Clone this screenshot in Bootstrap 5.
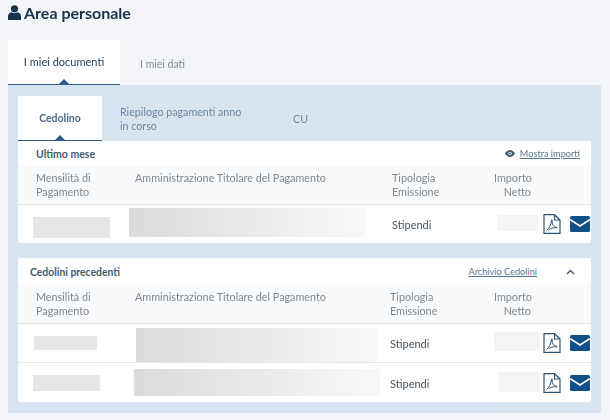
<!DOCTYPE html>
<html lang="it">
<head>
<meta charset="utf-8">
<title>Area personale</title>
<link rel="stylesheet" href="https://cdn.jsdelivr.net/npm/bootstrap@5.3.0/dist/css/bootstrap.min.css">
<style>
html,body{height:100%;overflow:hidden}
body{background:#f3f5f9;font-family:Lato,"Open Sans",sans-serif;font-size:11px;color:#4a5660;line-height:14px;padding:0 9px 0 8px;position:relative;filter:blur(.35px)}
.page-title{font-size:16px;line-height:20px;font-weight:700;color:#17324d;margin:0;padding:3px 0 0 0;height:40px;display:flex;align-items:flex-start;gap:3px}
.page-title svg{margin-top:2px}
.tabs-main{border:0;height:45px;flex-wrap:nowrap}
.tabs-main .nav-link,.tabs-sub .nav-link{border:0;border-radius:0;background:transparent;position:relative;margin:0;color:#6c87a1;font-size:10.7px;line-height:14px;padding:0}
.tabs-main .nav-link{height:45px;display:flex;align-items:center}
.tabs-main .nav-link.active,.tabs-sub .nav-link.active{background:#fff;color:#2a4359;border-bottom:1.5px solid #2f5d8a;justify-content:center}
.tabs-main .nav-link.active::after,.tabs-sub .nav-link.active::after{content:"";position:absolute;left:50%;bottom:0;margin-left:-5px;border:5px solid transparent;border-top:0;border-bottom-color:#2f5d8a}
.t-docs{width:112px;font-size:11px!important;font-weight:400}
.t-dati{margin-left:20px!important;padding-top:2px!important;font-size:10.5px!important;color:#7d8e9e!important}
.work-panel{background:#d8e4f0;height:328px;padding:11px 10px 0;width:593px}
.tabs-sub{border:0;height:45px;flex-wrap:nowrap}
.tabs-sub .nav-link{height:45px;display:flex;align-items:center}
.t-ced{width:84px;color:#4d6a86!important;font-size:10.5px!important;font-weight:700}
.t-rie{width:126px;margin-left:18px!important}
.t-cu{margin-left:47px!important}
.pay-card{border:0;border-radius:2px;background:#fff;overflow:hidden}
.pay-one{height:102px;margin-bottom:15px}
.pay-two{height:144px}
.pay-head{background:#fff;display:flex;align-items:center;justify-content:space-between;padding:0 11px 0 18px;height:25px;font-weight:700;font-size:10.5px;color:#465a6d}
.pay-two .pay-head{height:27px;padding-left:12px;padding-right:16px;font-size:10.4px}
.pay-link{font-weight:400;font-size:9.2px;color:#5a7590;text-decoration:underline;display:flex;align-items:center;gap:5px}
.archive-side{display:flex;align-items:center;gap:29px}
.archive-side svg{display:block}
.pay-cols,.pay-row{display:grid;align-items:center}
.pay-cols{grid-template-columns:117px 257px 102px 37px;background:#f8fafc;height:39px;border-bottom:1px solid #dfe3e6;color:#7c8891;align-items:start;padding-top:5px;font-size:10.8px;font-weight:400}
.pay-two .pay-cols{grid-template-columns:117px 255px 104px 37px}
.pay-cols>div:first-child{padding-left:18px}
.num-head{text-align:right;white-space:nowrap}
.pay-row{grid-template-columns:111px 263px 102px 46px 1fr;height:38px}
.pay-two .pay-row{grid-template-columns:111px 261px 104px 46px 1fr;height:39px;border-bottom:1px solid #e4e7ea}
.pay-two .pay-row:last-child{border-bottom:0}
.row-label{padding-top:2px}
.mask{display:block;background:#e6e6e5}
.wash{background:linear-gradient(90deg,#dbdcda,#e5e5e3 35%,#f3f3f2 80%,#f8f8f8)}
.faint{background:#f4f4f4}
.m1{width:77px;height:21px;margin:7px 0 0 15px}
.w1{width:236px;height:29px;margin:-4px 0 0 0}
.f1{width:40px;height:16px;margin:-2px 0 0 4px}
.m2{width:63px;height:14px;margin:0 0 0 16px}
.w2{width:242px;height:34px;margin:4px 0 0 7px}
.f2{width:46px;height:19px;margin:-3px 0 0 0}
.m3{width:67px;height:16px;margin:0 0 0 15px}
.w3{width:246px;height:27px;margin:0 0 0 5px}
.f3{width:41px;height:20px;margin:-2px 0 0 5px}
.act-icons{display:flex;align-items:center;gap:9px;margin-left:3px}
.act-icons svg{display:block}
.water{position:absolute;left:500px;top:402px;color:#dde3e9;font-size:9px;letter-spacing:.2px}
</style>
</head>
<body>
<h1 class="page-title">
<svg width="13" height="15" viewBox="0 0 13 15"><circle cx="6.500" cy="3.800" r="3.600" fill="#17324d"/><path d="M0 15v-3.200C0 8.900 1.800 7.500 3.400 7.300 4.400 8 5.400 8.300 6.500 8.300s2.100-.3 3.100-1c1.600.2 3.400 1.600 3.400 4.500V15z" fill="#17324d"/></svg>
Area personale</h1>
<ul class="nav nav-tabs tabs-main">
<li class="nav-item"><a class="nav-link active t-docs" href="#">I miei documenti</a></li>
<li class="nav-item"><a class="nav-link t-dati" href="#">I miei dati</a></li>
</ul>
<div class="work-panel">
<ul class="nav nav-tabs tabs-sub">
<li class="nav-item"><a class="nav-link active t-ced" href="#">Cedolino</a></li>
<li class="nav-item"><a class="nav-link t-rie" href="#">Riepilogo pagamenti anno in corso</a></li>
<li class="nav-item"><a class="nav-link t-cu" href="#">CU</a></li>
</ul>
<div class="card pay-card pay-one">
<div class="pay-head"><span>Ultimo mese</span>
<span class="pay-link"><svg width="10" height="7" viewBox="0 0 10 7"><path d="M0 3.500C1.200 1.300 3 0 5 0s3.800 1.300 5 3.500C8.800 5.700 7 7 5 7S1.200 5.700 0 3.500z" fill="#44607c"/><circle cx="5" cy="3.500" r="1.700" fill="#fff"/><circle cx="5" cy="3.500" r="1" fill="#44607c"/></svg><a class="pay-link" href="#">Mostra importi</a></span></div>
<div class="pay-cols"><div>Mensilità di<br>Pagamento</div><div>Amministrazione Titolare del Pagamento</div><div>Tipologia<br>Emissione</div><div class="num-head">Importo<br>Netto</div></div>
<div class="pay-row"><span class="mask m1"></span><span class="mask wash w1"></span><span class="row-label">Stipendi</span><span class="mask faint f1"></span>
<div class="act-icons">
<svg width="18" height="20" viewBox="0 0 18 20"><path d="M1 .7h10.500L17 6v13.300H1zM11.500.7V6H17" fill="#fff" stroke="#2e5474" stroke-width="1.200"/><path d="M3.500 16.500C6 15 8.500 10 8.400 6.500c0-1.200 1-.8.800.5-.4 3 1 5.600 5 6.700-3.200-.3-7 .5-8.500 2.100" fill="none" stroke="#2e5474" stroke-width="1"/></svg>
<svg width="20" height="16" viewBox="0 0 20 16"><rect width="20" height="16" rx="1.500" fill="#0f5089"/><path d="M0 3.500 10 10 20 3.500" fill="none" stroke="#fff" stroke-width="1.500"/></svg>
</div></div>
</div>
<div class="card pay-card pay-two">
<div class="pay-head"><span>Cedolini precedenti</span>
<span class="archive-side"><a class="pay-link" href="#">Archivio Cedolini</a><svg width="9" height="6" viewBox="0 0 9 6"><path d="M1 5 4.500 1.500 8 5" fill="none" stroke="#44607c" stroke-width="1.500"/></svg></span></div>
<div class="pay-cols"><div>Mensilità di<br>Pagamento</div><div>Amministrazione Titolare del Pagamento</div><div>Tipologia<br>Emissione</div><div class="num-head">Importo<br>Netto</div></div>
<div class="pay-row"><span class="mask m2"></span><span class="mask wash w2"></span><span class="row-label">Stipendi</span><span class="mask faint f2"></span>
<div class="act-icons">
<svg width="18" height="20" viewBox="0 0 18 20"><path d="M1 .7h10.500L17 6v13.300H1zM11.500.7V6H17" fill="#fff" stroke="#2e5474" stroke-width="1.200"/><path d="M3.500 16.500C6 15 8.500 10 8.400 6.500c0-1.200 1-.8.800.5-.4 3 1 5.600 5 6.700-3.200-.3-7 .5-8.500 2.100" fill="none" stroke="#2e5474" stroke-width="1"/></svg>
<svg width="20" height="16" viewBox="0 0 20 16"><rect width="20" height="16" rx="1.500" fill="#0f5089"/><path d="M0 3.500 10 10 20 3.500" fill="none" stroke="#fff" stroke-width="1.500"/></svg>
</div></div>
<div class="pay-row"><span class="mask m3"></span><span class="mask wash w3"></span><span class="row-label">Stipendi</span><span class="mask faint f3"></span>
<div class="act-icons">
<svg width="18" height="20" viewBox="0 0 18 20"><path d="M1 .7h10.500L17 6v13.300H1zM11.500.7V6H17" fill="#fff" stroke="#2e5474" stroke-width="1.200"/><path d="M3.500 16.500C6 15 8.500 10 8.400 6.500c0-1.200 1-.8.800.5-.4 3 1 5.600 5 6.700-3.200-.3-7 .5-8.500 2.100" fill="none" stroke="#2e5474" stroke-width="1"/></svg>
<svg width="20" height="16" viewBox="0 0 20 16"><rect width="20" height="16" rx="1.500" fill="#0f5089"/><path d="M0 3.500 10 10 20 3.500" fill="none" stroke="#fff" stroke-width="1.500"/></svg>
</div></div>
</div>
</div>
<div class="water">WWW.NIGIAPA.IT</div>
</body>
</html>
